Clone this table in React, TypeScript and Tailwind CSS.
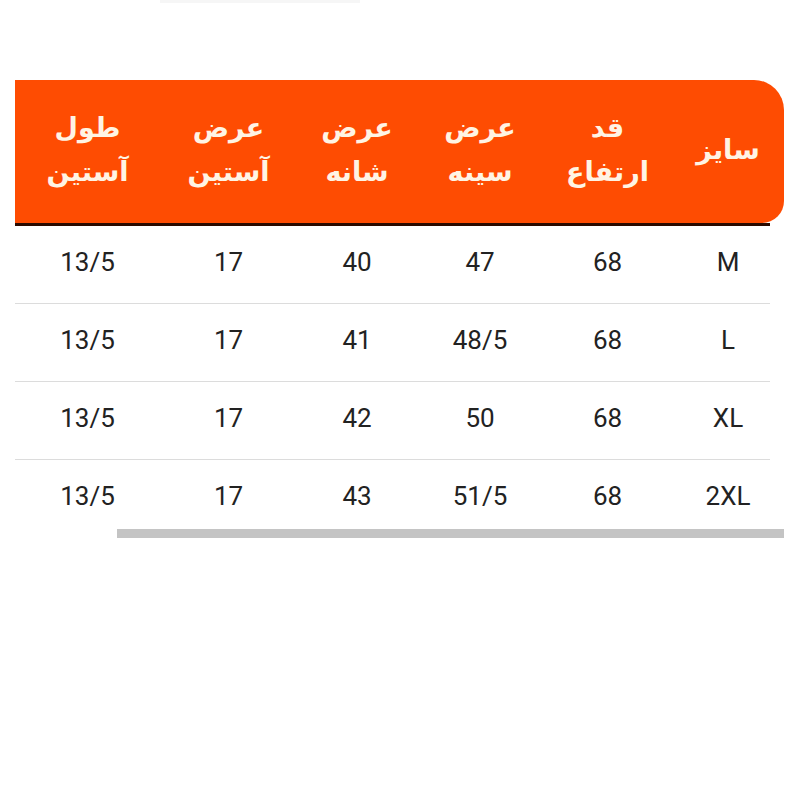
import React from "react";

const cols = "grid-cols-[112px_129px_126px_120px_137px_145px]";

const headers: string[][] = [
  ["سایز"],
  ["قد", "ارتفاع"],
  ["عرض", "سینه"],
  ["عرض", "شانه"],
  ["عرض", "آستین"],
  ["طول", "آستین"],
];

const rows: string[][] = [
  ["M", "68", "47", "40", "17", "13/5"],
  ["L", "68", "48/5", "41", "17", "13/5"],
  ["XL", "68", "50", "42", "17", "13/5"],
  ["2XL", "68", "51/5", "43", "17", "13/5"],
];

const App = () => {
  return (
    <div className="w-[800px] h-[800px] bg-white relative">
      <div className="absolute top-0 left-[160px] w-[200px] h-[3px] bg-[#f6f6f6]"></div>
      <div className="pt-[80px] pl-[15px] w-[784px]" dir="rtl">
        <div
          className={`grid ${cols} h-[143px] bg-[#fe4c02] rounded-tr-[30px] rounded-br-[22px] text-[#fff4e4] font-bold text-[27px] leading-[44px]`}
          style={{ fontFamily: '"DejaVu Sans", "Noto Sans", sans-serif' }}
        >
          {headers.map((h, i) => (
            <div key={i} className="flex flex-col items-center justify-center pb-1">
              {h.map((t, j) => (
                <span key={j}>{t}</span>
              ))}
            </div>
          ))}
        </div>
        <div className="h-[3px] w-[755px] bg-[#2a0a00] mr-[14px]"></div>
        <div
          className="text-[26px] text-[#222]"
          style={{ fontFamily: "Roboto, Arial, sans-serif" }}
        >
          {rows.map((r, i) => (
            <div key={i}>
              <div className={`grid ${cols} h-[77px]`}>
                {r.map((c, j) => (
                  <div key={j} className="flex items-center justify-center pb-[5px]" dir="ltr">
                    {c}
                  </div>
                ))}
              </div>
              {i < rows.length - 1 && (
                <div className="h-px w-[755px] mr-[14px] bg-[#dcdcdc]"></div>
              )}
            </div>
          ))}
        </div>
        <div className="h-[9px] w-[667px] bg-[#c4c4c4] -mt-[8px]"></div>
      </div>
    </div>
  );
};

export default App;
